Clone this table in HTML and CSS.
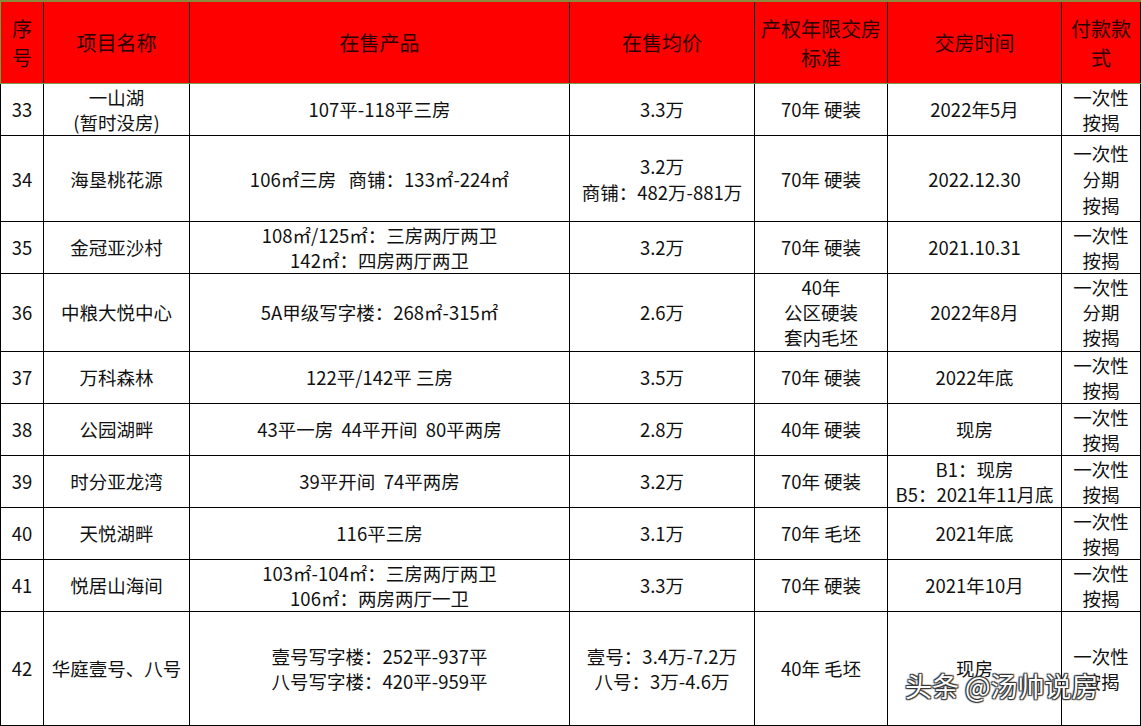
FILE: index.html
```html
<!DOCTYPE html>
<html lang="zh-CN">
<head>
<meta charset="utf-8">
<title>在售项目</title>
<link rel="stylesheet" href="styles.css">
</head>
<body>
<div class="sheet">
<table class="grid">
<colgroup>
<col class="c1"><col class="c2"><col class="c3"><col class="c4"><col class="c5"><col class="c6"><col class="c7">
</colgroup>
<thead>
<tr class="head">
<th>序<br>号</th><th>项目名称</th><th>在售产品</th><th>在售均价</th><th>产权年限交房<br>标准</th><th>交房时间</th><th>付款款<br>式</th>
</tr>
</thead>
<tbody>
<tr class="r52"><td>33</td><td>一山湖<br>(暂时没房)</td><td>107平-118平三房</td><td>3.3万</td><td>70年 硬装</td><td>2022年5月</td><td>一次性<br>按揭</td></tr>
<tr class="r86"><td>34</td><td>海垦桃花源</td><td>106㎡三房&nbsp;&nbsp;&nbsp;商铺：133㎡-224㎡</td><td>3.2万<br>商铺：482万-881万</td><td>70年 硬装</td><td>2022.12.30</td><td>一次性<br>分期<br>按揭</td></tr>
<tr class="r52"><td>35</td><td>金冠亚沙村</td><td>108㎡/125㎡：三房两厅两卫<br>142㎡：四房两厅两卫</td><td>3.2万</td><td>70年 硬装</td><td>2021.10.31</td><td>一次性<br>按揭</td></tr>
<tr class="r78"><td>36</td><td>中粮大悦中心</td><td>5A甲级写字楼：268㎡-315㎡</td><td>2.6万</td><td>40年<br>公区硬装<br>套内毛坯</td><td>2022年8月</td><td>一次性<br>分期<br>按揭</td></tr>
<tr class="r52"><td>37</td><td>万科森林</td><td>122平/142平 三房</td><td>3.5万</td><td>70年 硬装</td><td>2022年底</td><td>一次性<br>按揭</td></tr>
<tr class="r52"><td>38</td><td>公园湖畔</td><td>43平一房&nbsp;&nbsp;44平开间&nbsp;&nbsp;80平两房</td><td>2.8万</td><td>40年 硬装</td><td>现房</td><td>一次性<br>按揭</td></tr>
<tr class="r52"><td>39</td><td>时分亚龙湾</td><td>39平开间&nbsp;&nbsp;74平两房</td><td>3.2万</td><td>70年 硬装</td><td>B1：现房<br>B5：2021年11月底</td><td>一次性<br>按揭</td></tr>
<tr class="r52"><td>40</td><td>天悦湖畔</td><td>116平三房</td><td>3.1万</td><td>70年 毛坯</td><td>2021年底</td><td>一次性<br>按揭</td></tr>
<tr class="r52"><td>41</td><td>悦居山海间</td><td>103㎡-104㎡：三房两厅两卫<br>106㎡：两房两厅一卫</td><td>3.3万</td><td>70年 硬装</td><td>2021年10月</td><td>一次性<br>按揭</td></tr>
<tr class="r114"><td>42</td><td>华庭壹号、八号</td><td>壹号写字楼：252平-937平<br>八号写字楼：420平-959平</td><td>壹号：3.4万-7.2万<br>八号：3万-4.6万</td><td>40年 毛坯</td><td>现房</td><td>一次性<br>按揭</td></tr>
</tbody>
</table>
<div class="watermark">头条 @汤帅说房</div>
</div>
</body>
</html>
```

FILE: styles.css
```css
html, body {
  margin: 0;
  padding: 0;
  background: #ffffff;
}
.sheet {
  position: relative;
  width: 1141px;
  height: 726px;
  overflow: hidden;
  font-family: "Noto Sans CJK SC", "Noto Sans", sans-serif;
  color: #111;
}
.grid {
  border-collapse: collapse;
  table-layout: fixed;
  width: 1140px;
  border-left: 1px solid #5fa84a;
}
.c1 { width: 43px; }
.c2 { width: 146px; }
.c3 { width: 380px; }
.c4 { width: 185px; }
.c5 { width: 133px; }
.c6 { width: 174px; }
.c7 { width: 79px; }
.grid th, .grid td {
  border: 1px solid #000;
  text-align: center;
  vertical-align: middle;
  padding: 0;
  overflow: hidden;
  white-space: nowrap;
}
.grid td {
  font-size: 18.5px;
  line-height: 25px;
}
.head th {
  height: 81px;
  background: #ff0000;
  font-weight: normal;
  font-size: 20px;
  line-height: 29px;
  color: #2a0000;
  border-top: 2px solid #8a8a3c;
  border-bottom: 1px solid #7a9a50;
}
.head th:first-child { border-left: 1px solid #5fa84a; }
.r52 td { height: 51px; }
.r78 td { height: 77px; }
.r86 td { height: 85px; line-height: 26px; }
.r114 td { height: 113px; }
.watermark {
  position: absolute;
  left: 905px;
  top: 669px;
  font-size: 27px;
  line-height: 34px;
  color: #fff;
  font-family: "Noto Sans CJK SC", sans-serif;
  text-shadow: 0 0 2px #333, 1px 1px 1px #333, -1px -1px 1px #333, 1px -1px 1px #333, -1px 1px 1px #333;
}
```
